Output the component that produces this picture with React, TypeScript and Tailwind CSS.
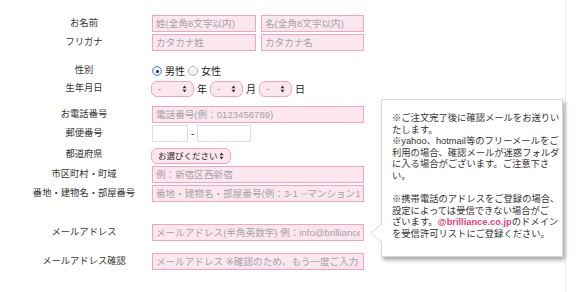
const font = { fontFamily: '"Liberation Sans", "Noto Sans CJK JP", sans-serif' };
const inputFont = { fontFamily: '"Liberation Sans", "DejaVu Sans", "Noto Sans CJK JP", sans-serif' };

function Label({ children }: { children: React.ReactNode }) {
  return (
    <div className="w-[136px] shrink-0 text-center text-[9.3px] leading-none text-[#333]">{children}</div>
  );
}

function PinkInput({ placeholder, w }: { placeholder: string; w: string }) {
  return (
    <input
      readOnly
      placeholder={placeholder}
      style={inputFont}
      className={`${w} h-[17px] border border-[#f5a3c4] bg-[#fde7ef] px-[3px] text-[9.6px] text-[#333] outline-none placeholder:text-[#a3a3a3]`}
    />
  );
}

function Arrows() {
  return (
    <svg width="5" height="8" viewBox="0 0 5 8" className="shrink-0">
      <path d="M0.5 3.2 L2.5 0.6 L4.5 3.2 Z M0.5 4.8 L2.5 7.4 L4.5 4.8 Z" fill="#333" />
    </svg>
  );
}

function Pill({ text, w, dark }: { text: string; w: string; dark?: boolean }) {
  return (
    <div
      className={`${w} flex h-[16px] items-center justify-between whitespace-nowrap rounded-[6px] border border-[#f5a3c4] bg-[#fde7ef] pl-[6px] pr-[6px] leading-none ${dark ? "text-[8.5px] text-[#222]" : "text-[9.5px] text-[#888]"}`}
    >
      <span>{text}</span>
      <Arrows />
    </div>
  );
}

const tip1 = ["※ご注文完了後に確認メールをお送りい", "たします。", "※yahoo、hotmail等のフリーメールをご", "利用の場合、確認メールが迷惑フォルダ", "に入る場合がございます。ご注意下さ", "い。"];

export default function App() {
  return (
    <div className="h-[292px] w-[582px] bg-white" style={font}>
      <div className="relative h-[292px] w-[566px] border-r border-[#ebebeb] pl-[16px]">
        <div className="flex flex-col">
          <div className="mt-[15px] flex items-center">
            <Label>お名前</Label>
            <div className="flex gap-[5px]">
              <PinkInput placeholder="姓(全角8文字以内)" w="w-[104px]" />
              <PinkInput placeholder="名(全角8文字以内)" w="w-[103px]" />
            </div>
          </div>
          <div className="mt-[2px] flex items-center">
            <Label>フリガナ</Label>
            <div className="flex gap-[5px]">
              <PinkInput placeholder="カタカナ姓" w="w-[104px]" />
              <PinkInput placeholder="カタカナ名" w="w-[103px]" />
            </div>
          </div>
          <div className="mt-[12px] flex h-[16px] items-center">
            <Label>性別</Label>
            <div className="flex items-center text-[10px] text-[#222]">
              <span className="flex h-[10px] w-[10px] items-center justify-center rounded-full border border-[#4a8fe0] bg-white shadow-[inset_0_0_2px_#6aa8f0]">
                <span className="h-[3px] w-[3px] rounded-full bg-[#222]" />
              </span>
              <span className="ml-[3px]">男性</span>
              <span className="ml-[3px] h-[10px] w-[10px] rounded-full border border-[#b5b5b5] bg-gradient-to-b from-white to-[#ececec]" />
              <span className="ml-[3px]">女性</span>
            </div>
          </div>
          <div className="mt-[2px] flex items-center">
            <Label>生年月日</Label>
            <div className="-ml-[1px] flex items-center text-[10px] text-[#222]">
              <Pill text="-" w="w-[43px]" />
              <span className="mx-[3px]">年</span>
              <Pill text="-" w="w-[33px]" />
              <span className="mx-[3px]">月</span>
              <Pill text="-" w="w-[33px]" />
              <span className="ml-[3px]">日</span>
            </div>
          </div>
          <div className="mt-[9px] flex items-center">
            <Label>お電話番号</Label>
            <PinkInput placeholder="電話番号(例：0123456789)" w="w-[212px]" />
          </div>
          <div className="mt-[2px] flex items-center">
            <Label>郵便番号</Label>
            <div className="flex items-center text-[10px] text-[#333]">
              <input readOnly className="h-[17px] w-[36px] border border-[#dedede] bg-white outline-none" />
              <span className="mx-[3px]">-</span>
              <input readOnly className="h-[17px] w-[54px] border border-[#dedede] bg-white outline-none" />
            </div>
          </div>
          <div className="mt-[4px] flex items-center">
            <Label>都道府県</Label>
            <div className="-ml-[1px] mt-[2px]">
              <Pill text="お選びください" w="w-[80px]" dark />
            </div>
          </div>
          <div className="mt-[2px] flex items-center">
            <Label>市区町村・町域</Label>
            <PinkInput placeholder="例：新宿区西新宿" w="w-[212px]" />
          </div>
          <div className="mt-[2px] flex items-center">
            <Label>番地・建物名・部屋番号</Label>
            <PinkInput placeholder="番地・建物名・部屋番号(例：3-1 ◦◦マンション101)" w="w-[212px]" />
          </div>
          <div className="mt-[22px] flex items-center">
            <Label>メールアドレス</Label>
            <PinkInput placeholder="メールアドレス(半角英数字) 例：info@brilliance.co.jp" w="w-[212px]" />
          </div>
          <div className="mt-[12px] flex items-center">
            <Label>メールアドレス確認</Label>
            <PinkInput placeholder="メールアドレス ※確認のため、もう一度ご入力ください" w="w-[212px]" />
          </div>
        </div>

        <div className="absolute left-[381px] top-[99px] h-[158px] w-[182px] whitespace-nowrap border border-[#d9d9d9] bg-white pl-[10px] pt-[13px] text-[9.3px] leading-[11.6px] text-[#333] shadow-[2px_3px_4px_rgba(0,0,0,0.35)]">
          {tip1.map((l) => (
            <div key={l}>{l}</div>
          ))}
          <div className="mt-[11.6px]">※携帯電話のアドレスをご登録の場合、</div>
          <div>設定によっては受信できない場合がご</div>
          <div>
            ざいます。<span className="font-bold text-[#e8407e]">@brilliance.co.jp</span>のドメイン
          </div>
          <div>を受信許可リストにご登録ください。</div>
          <svg width="13" height="18" viewBox="0 0 13 18" className="absolute -left-[12px] top-[124px]">
            <path d="M12 0 L0.5 9 L12 18" fill="white" stroke="#d9d9d9" strokeWidth="1" />
            <rect x="12" y="0" width="2" height="18" fill="white" />
          </svg>
        </div>
      </div>
    </div>
  );
}
